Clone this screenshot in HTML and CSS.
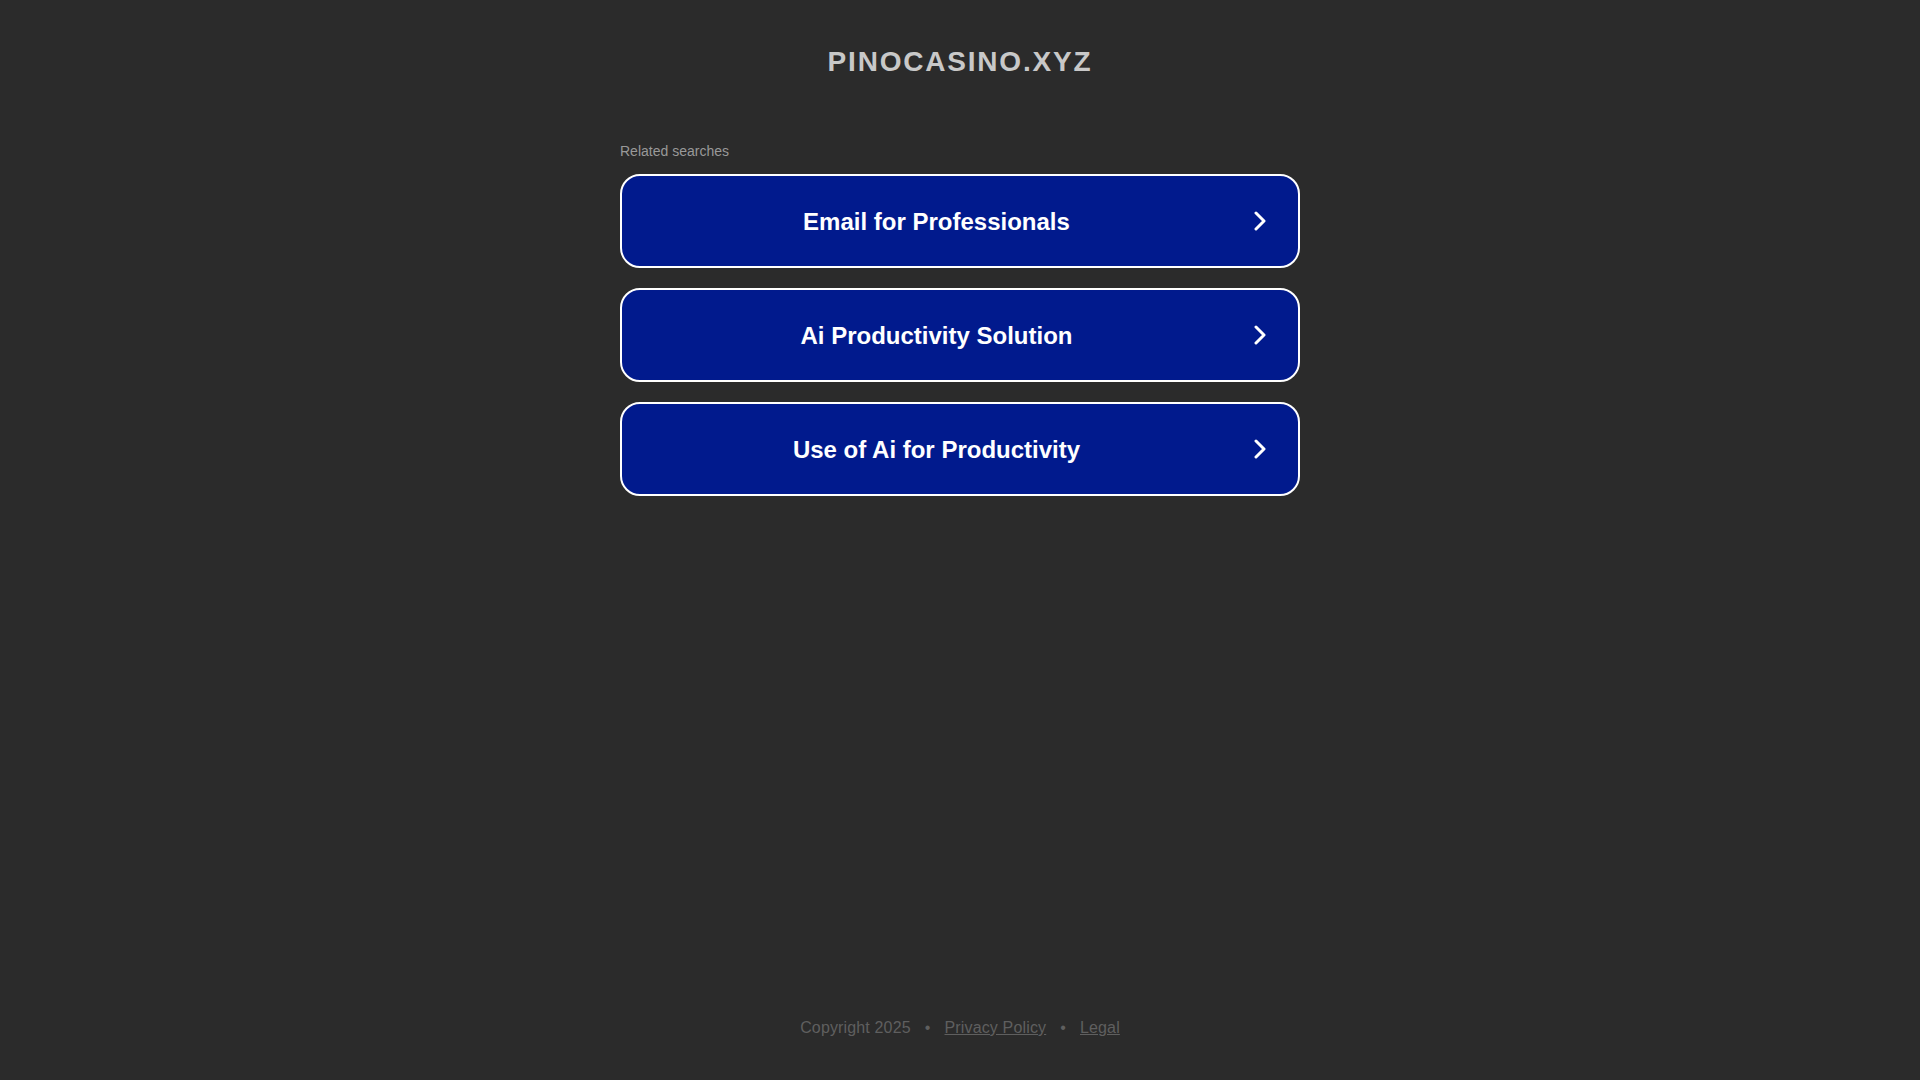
FILE: index.html
```html
<!DOCTYPE html>
<html lang="en">
<head>
<meta charset="utf-8">
<title>pinocasino.xyz</title>
<link rel="stylesheet" href="styles.css">
</head>
<body>
<div class="page">
  <header class="header">
    <h1 class="domain">PINOCASINO.XYZ</h1>
  </header>
  <main class="content">
    <div class="related-label">Related searches</div>
    <div class="links">
      <a class="link-box" href="#">
        <span class="link-text">Email for Professionals</span>
        <svg class="chevron" viewBox="0 0 12 20" width="12" height="20"><path d="M2 2 L10 10 L2 18" fill="none" stroke="#fff" stroke-width="3" stroke-linecap="round" stroke-linejoin="round"/></svg>
      </a>
      <a class="link-box" href="#">
        <span class="link-text">Ai Productivity Solution</span>
        <svg class="chevron" viewBox="0 0 12 20" width="12" height="20"><path d="M2 2 L10 10 L2 18" fill="none" stroke="#fff" stroke-width="3" stroke-linecap="round" stroke-linejoin="round"/></svg>
      </a>
      <a class="link-box" href="#">
        <span class="link-text">Use of Ai for Productivity</span>
        <svg class="chevron" viewBox="0 0 12 20" width="12" height="20"><path d="M2 2 L10 10 L2 18" fill="none" stroke="#fff" stroke-width="3" stroke-linecap="round" stroke-linejoin="round"/></svg>
      </a>
    </div>
  </main>
  <footer class="footer">
    <span>Copyright 2025</span>
    <span class="sep">•</span>
    <a href="#" class="foot-link">Privacy Policy</a>
    <span class="sep">•</span>
    <a href="#" class="foot-link">Legal</a>
  </footer>
</div>
</body>
</html>
```

FILE: styles.css
```css
html, body {
  margin: 0;
  padding: 0;
  background: #2b2b2b;
}

body {
  font-family: "Liberation Sans", Arial, sans-serif;
}

.page {
  min-height: 100vh;
  display: flex;
  flex-direction: column;
  align-items: center;
}

.header {
  padding-top: 45px;
}

.domain {
  margin: 0;
  font-size: 28px;
  line-height: 34px;
  font-weight: bold;
  letter-spacing: 1.8px;
  color: #c8c8c8;
  text-align: center;
}

.content {
  width: 680px;
  margin-top: 64px;
}

.related-label {
  font-size: 14px;
  line-height: 16px;
  color: #999999;
  margin-bottom: 15px;
}

.links {
  display: flex;
  flex-direction: column;
  gap: 20px;
}

.link-box {
  box-sizing: border-box;
  height: 94px;
  display: flex;
  align-items: center;
  background: #011a8d;
  border: 2px solid #ffffff;
  border-radius: 20px;
  padding: 0 32px 0 2px;
  text-decoration: none;
  color: #ffffff;
}

.link-text {
  flex: 1;
  text-align: center;
  font-size: 24px;
  font-weight: bold;
  line-height: 28px;
  padding-top: 1px;
}

.chevron {
  display: block;
  margin-left: 5px;
  width: 12px;
  height: 20px;
}

.footer {
  margin-top: auto;
  padding-bottom: 42px;
  display: flex;
  gap: 14px;
  font-size: 16px;
  line-height: 20px;
  letter-spacing: 0.15px;
  color: #5f5f5f;
}

.foot-link {
  color: #5f5f5f;
  text-decoration: underline;
}
```
